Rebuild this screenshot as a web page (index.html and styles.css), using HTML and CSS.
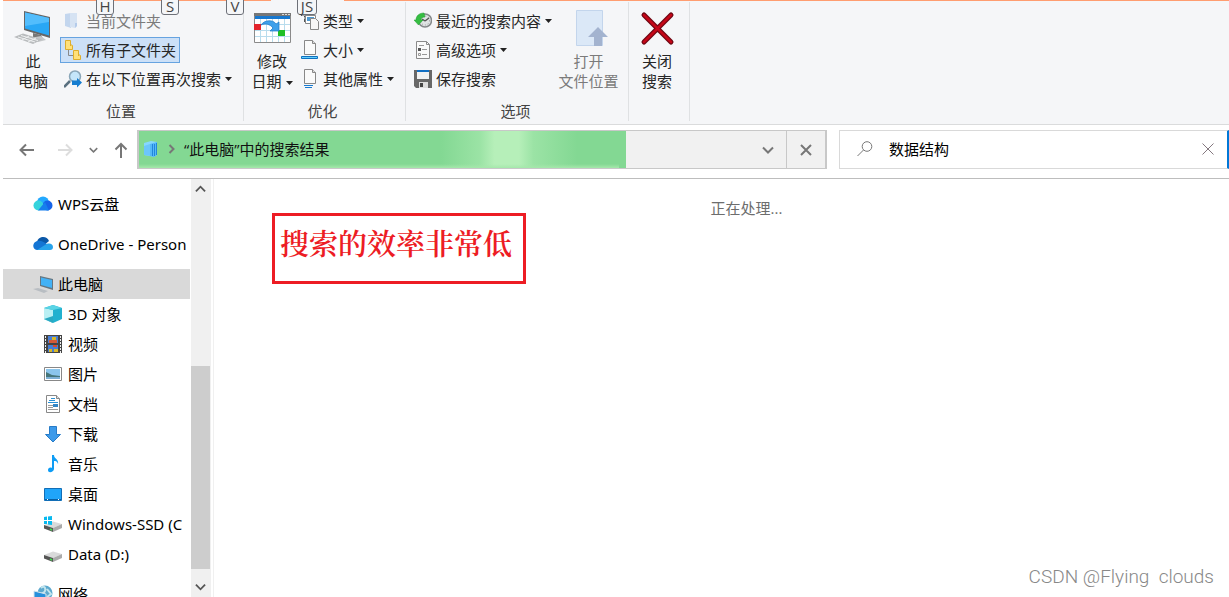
FILE: index.html
```html
<!DOCTYPE html>
<html lang="zh-CN">
<head>
<meta charset="utf-8">
<title>“此电脑”中的搜索结果</title>
<link rel="stylesheet" href="styles.css">
</head>
<body>
<svg class="defs" aria-hidden="true">
  <symbol id="arrow" viewBox="0 0 7 4"><path d="M0 0h7L3.500 4z" fill="#222"/></symbol>
  <symbol id="chev" viewBox="0 0 12 8"><path d="M1 1.500l5 5 5-5" fill="none" stroke="currentColor" stroke-width="2"/></symbol>
  <symbol id="drive" viewBox="0 0 18 18"><path d="M0 10l9-3.500 9 2.500-9 4z" fill="#d9dada"/><path d="M0 10l9 3v4L0 13.500z" fill="#555"/><path d="M9 13l9-4v4l-9 4z" fill="#aaa"/><path d="M6 14l2 1" stroke="#3ee04a" stroke-width="1.500"/></symbol>
</svg>

<header class="ribbon">
  <section class="group">
    <div class="tools">
      <button class="big">
        <svg width="38" height="38" viewBox="0 0 38 38"><path d="M10 3l26 6v21l-26-8z" fill="#666"/><path d="M11 4.500l24 5.500v17.500L11 20.500z" fill="#29a7f5"/><path d="M11 4.500l24 5.500v4L11 18z" fill="#53bdfc"/><path d="M19 25l8 2 2 4-10-2z" fill="#777"/><path d="M16 30l11-2 5 4-8 2z" fill="#c4c7c9"/><path d="M0 29l9-3.500 19 6L19 36z" fill="#b9bcbe"/><path d="M4 29l17 5M7 27.500l17 5M8 32l7-4M14 34l8-4" stroke="#eef0f1"/></svg>
        <span>此<br>电脑</span>
      </button>
      <div class="list">
        <button class="row off"><svg width="18" height="18" viewBox="0 0 18 18"><path d="M1 2l6-1v15l-6-2z" fill="#c3d6ee"/><path d="M6 1h7v13l-2 2-5-1z" fill="#d6e3f3"/><path d="M11 11h2v3l-2 2z" fill="#b4cbea"/></svg><span>当前文件夹</span></button>
        <button class="row on"><svg width="18" height="20" viewBox="0 0 18 20"><path d="M4.500 9v6.500H9" fill="none" stroke="#888"/><path d="M1.500.5h5v4l2 1v4h-7zM9.500 10.500h5v4l2 1v4h-7z" fill="#ffe07a" stroke="#dfae2d"/><path d="M6.500 3v3M14.500 13v3" stroke="#dfae2d"/></svg><span>所有子文件夹</span></button>
        <button class="row"><svg width="18" height="18" viewBox="0 0 18 18"><path d="M0 17l6-6" stroke="#59707f" stroke-width="2.500"/><circle cx="11" cy="6.500" r="5.500" fill="#c5e6fa" stroke="#8aa6b8" stroke-width="1.500"/><path d="M8 10.500h5V8l5 4.500-5 5V15H8z" fill="#167dd0"/></svg><span>在以下位置再次搜索</span><svg class="arrow"><use href="#arrow"/></svg></button>
      </div>
    </div>
    <h2>位置</h2>
  </section>

  <section class="group narrow">
    <div class="tools">
      <button class="big">
        <svg width="38" height="38" viewBox="0 0 38 38"><path d="M1.500 5.500h36v29h-36z" fill="#fff" stroke="#8a8a8a"/><path d="M7.500 11v23M13.500 11v23M19.500 11v23M25.500 11v23M31.500 11v23M2 16.500h35M2 22.500h35M2 28.500h35" stroke="#b8dced"/><path d="M1 5h37v3H1z" fill="#777"/><path d="M29 6.500h2m1 0h2m1 0h2" stroke="#ddd"/><path d="M2 8h35v3H2z" fill="#1878cf"/><path d="M1 16h7v6H1z" fill="#e3242b"/><path d="M25 22h7v6h-7z" fill="#1fbf24"/><path d="M8 17c3-5 12-6 15-1l3-2v9h-9l3-3c-3-4-8-5-12-3z" fill="#3fa0ea" stroke="#1b77c4" stroke-width=".7"/></svg>
        <span>修改<br>日期<svg class="arrow"><use href="#arrow"/></svg></span>
      </button>
      <div class="list">
        <button class="row"><svg width="18" height="18" viewBox="0 0 18 18"><path d="M0 1h6v9H3V4H0z" fill="#555"/><path d="M1 3h3M1 6h3" stroke="#fff"/><path d="M4.500 3.500h10v8h-10z" fill="#fff" stroke="#888"/><path d="M6 5h7v4H6z" fill="#4e9ad3"/><path d="M9.500 6.500h5l3 3v8h-8z" fill="#f7f7f7" stroke="#888"/></svg><span>类型</span><svg class="arrow"><use href="#arrow"/></svg></button>
        <button class="row"><svg width="18" height="20" viewBox="0 0 18 20"><path d="M3.500.5h8l3 3v11h-11z" fill="#fafafa" stroke="#888"/><path d="M11.500.5v3h3" fill="#ddd" stroke="#888"/><path d="M.5 16.500h16v2H.5z" fill="#63d0fa" stroke="#0f70c0"/></svg><span>大小</span><svg class="arrow"><use href="#arrow"/></svg></button>
        <button class="row"><svg width="18" height="20" viewBox="0 0 18 20"><path d="M3.500.5h8l3 3v11h-11z" fill="#fafafa" stroke="#888"/><path d="M11.500.5v3h3" fill="#ddd" stroke="#888"/><path d="M3 16.500h9M4 18.500h7" stroke="#187bd0"/></svg><span>其他属性</span><svg class="arrow"><use href="#arrow"/></svg></button>
      </div>
    </div>
    <h2>优化</h2>
  </section>

  <section class="group options">
    <div class="tools">
      <div class="list">
        <button class="row"><svg width="18" height="18" viewBox="0 0 18 18"><circle cx="11" cy="8.500" r="6.500" fill="#dfe3e4" stroke="#85898b" stroke-width="1.500"/><circle cx="11" cy="8.500" r="4.500" fill="none" stroke="#999" stroke-dasharray="1 2"/><path d="M11 9l4-3M11 9L8 7" stroke="#555" stroke-width="1.500"/><path d="M10 1C5 1 2 4 2 8H0l4.500 5L9 8H7c0-2 1-3 4-3z" fill="#35bd42" stroke="#229b31" stroke-width=".5"/></svg><span>最近的搜索内容</span><svg class="arrow"><use href="#arrow"/></svg></button>
        <button class="row"><svg width="18" height="18" viewBox="0 0 18 18"><path d="M2.500.5h10l3 3v14h-13z" fill="#fafafa" stroke="#8a8a8a"/><path d="M12.500.5v3h3" fill="none" stroke="#8a8a8a"/><path d="M4 7h3v3H4z" fill="#555"/><path d="M8 8.500h5M8 13.500h5M5 4.500h5" stroke="#999"/><path d="M4.500 12.500h2v2h-2z" fill="none" stroke="#999"/></svg><span>高级选项</span><svg class="arrow"><use href="#arrow"/></svg></button>
        <button class="row"><svg width="18" height="18" viewBox="0 0 18 18"><path d="M0 0h18v18H2l-2-2z" fill="#686868"/><path d="M3 0h12v9H3z" fill="#f2f2f2"/><path d="M3 0h12v2H3z" fill="#126fc2"/><path d="M5 12h9v6H5z" fill="#ddd"/><path d="M6 13h3v4H6z" fill="#444"/></svg><span>保存搜索</span></button>
      </div>
      <button class="big off">
        <svg width="38" height="38" viewBox="0 0 38 38"><path d="M6.500 2.500h26v35h-26z" fill="#dbe8f7" stroke="#c3d5ec"/><path d="M18 29l10-10 10 10h-6v9h-8v-9z" fill="#a3b3cf"/></svg>
        <span>打开<br>文件位置</span>
      </button>
    </div>
    <h2>选项</h2>
  </section>

  <section class="group narrow">
    <div class="tools">
      <button class="big">
        <svg width="38" height="38" viewBox="0 0 38 38"><path d="M6 7l27 27M33 7L6 34" stroke="#6d0713" stroke-width="5" stroke-linecap="round"/><path d="M6 7l27 27M33 7L6 34" stroke="#c40718" stroke-width="2.500" stroke-linecap="round"/></svg>
        <span>关闭<br>搜索</span>
      </button>
    </div>
  </section>
  <kbd class="tip tip-h">H</kbd><kbd class="tip tip-s">S</kbd><kbd class="tip tip-v">V</kbd><kbd class="tip tip-js">JS</kbd>
</header>

<nav class="navbar">
  <div class="history">
    <button class="back" aria-label="后退"><svg width="16" height="14" viewBox="0 0 16 14"><path d="M15 7H2M7 1.500L1.500 7 7 12.500" fill="none" stroke="#777" stroke-width="2"/></svg></button>
    <button aria-label="前进"><svg width="16" height="14" viewBox="0 0 16 14"><path d="M1 7h13M9 1.500L14.500 7 9 12.500" fill="none" stroke="#ddd" stroke-width="2"/></svg></button>
    <button aria-label="最近位置"><svg width="9" height="6"><use href="#chev"/></svg></button>
    <button aria-label="向上"><svg width="14" height="16" viewBox="0 0 14 16"><path d="M7 16V2M1.500 7.500L7 2l5.500 5.500" fill="none" stroke="#777" stroke-width="2"/></svg></button>
  </div>
  <div class="address">
    <div class="crumbs">
      <svg width="16" height="18" viewBox="0 0 16 18"><path d="M1 3l7-2 6 1v13l-3 2-4-1-6-1z" fill="#86d7ff"/><path d="M1 6l6-2v12l-6-1z" fill="#6cc6fb"/><path d="M7 4l7-2v13l-3 2-4-1z" fill="#55b9f8"/><path d="M9.500 4v12M11.500 4v12M13.500 3v12" stroke="#2385dc"/></svg>
      <svg width="7" height="10" viewBox="0 0 7 10"><path d="M1.500 1l4 4-4 4" fill="none" stroke="#777" stroke-width="2"/></svg>
      <span>“此电脑”中的搜索结果</span>
    </div>
    <button class="drop" aria-label="历史记录"><svg width="12" height="8"><use href="#chev"/></svg></button>
    <button class="stop" aria-label="停止"><svg width="12" height="12" viewBox="0 0 12 12"><path d="M1 1l10 10M11 1L1 11" stroke="#777" stroke-width="2"/></svg></button>
  </div>
  <div class="search">
    <svg width="16" height="16" viewBox="0 0 16 16"><circle cx="10" cy="5.500" r="4.800" fill="none" stroke="#777"/><path d="M6.500 9L.5 15" stroke="#777"/></svg>
    <input type="text" aria-label="搜索" value="数据结构">
    <button aria-label="清除"><svg width="12" height="12" viewBox="0 0 12 12"><path d="M.5.5l11 11M11.500.5l-11 11" stroke="#84787f"/></svg></button>
  </div>
</nav>

<div class="body">
  <aside class="sidebar">
    <ul class="tree">
      <li class="top"><svg width="20" height="18" viewBox="0 0 20 18"><circle cx="10" cy="7.500" r="6" fill="#23a9ff"/><circle cx="14.500" cy="10.500" r="5" fill="#1664e8"/><circle cx="5.500" cy="10.500" r="5" fill="#35d3dc"/><path d="M5 15.500L12 7l4 8.500z" fill="#167fed"/></svg><span>WPS云盘</span></li>
      <li class="top"><svg width="20" height="18" viewBox="0 0 20 18"><path d="M4 7c1-6 10-7 12-1l-6 5z" fill="#0b58a8"/><path d="M4 15c-6-1-4-9 1-9 4-1 7 2 10 4l-2 5z" fill="#1475d4"/><path d="M4 15l8-5c4-3 8-1 8 2 0 2-1 3-3 3z" fill="#28a3eb"/></svg><span>OneDrive - Person</span></li>
      <li class="top current"><svg width="20" height="18" viewBox="0 0 20 18"><path d="M7 1l13 3v11L7 11z" fill="#667681"/><path d="M8 2.500l11 2.500v8L8 10z" fill="#43b2f6"/><path d="M0 14l5-1 10 3-4 2z" fill="#b8bdc2"/></svg><span>此电脑</span></li>
      <li><svg width="18" height="18" viewBox="0 0 18 18"><path d="M0 3l9-3 9 3v11l-9 4-9-4z" fill="#22b1cf"/><path d="M0 3l9 2v13l-9-4z" fill="#baf0f4"/><path d="M0 3l9-3 9 3-9 2z" fill="#5ad4e5"/><path d="M0 14l9-3v7z" fill="#2aa9c2"/></svg><span>3D 对象</span></li>
      <li><svg width="18" height="18" viewBox="0 0 18 18"><path d="M0 0h18v18H0z" fill="#444"/><path d="M1.500 1v17M16.500 1v17" stroke="#eee" stroke-dasharray="2 1"/><path d="M4 1h10v7H4zM4 10h10v7H4z" fill="#477ed4"/><path d="M5 5h8v3H5z" fill="#d35b38"/><path d="M8 2h4v3H8zM5 14h3v3H5zM10 14h4v3h-4z" fill="#d9b728"/><path d="M9 10h4v2H9z" fill="#d84a2f"/></svg><span>视频</span></li>
      <li><svg width="18" height="18" viewBox="0 0 18 18"><path d="M.5 2.500h17v13H.5z" fill="#fff" stroke="#888"/><path d="M2 4h14v10H2z" fill="#8bc5ec"/><path d="M2 7l6 3 8 1v3H2z" fill="#46767a"/><path d="M2 12h14v2H2z" fill="#7eb0d5"/></svg><span>图片</span></li>
      <li><svg width="18" height="18" viewBox="0 0 18 18"><path d="M2.500.5h10l3 3v14h-13z" fill="#fff" stroke="#888"/><path d="M12.500.5v3h3" fill="#ddd" stroke="#888"/><path d="M7 3.500h4M5 5.500h6M4 7.500h10" stroke="#2a90d4"/><path d="M4 10.500h5M4 12.500h5M4 14.500h10" stroke="#999"/><path d="M9 9h5v3H9z" fill="#3386c6"/></svg><span>文档</span></li>
      <li><svg width="18" height="18" viewBox="0 0 18 18"><path d="M5.500 1.500h7v8h4L9 17 1.500 9.500h4z" fill="#3c9aea" stroke="#277bc7"/></svg><span>下载</span></li>
      <li><svg width="18" height="18" viewBox="0 0 18 18"><path d="M8 0h2c0 4 5 4 4 9-1-3-2-3-4-3v8c0 3-6 5-6 1 0-2 2-3 4-2z" fill="#0d9cf5"/></svg><span>音乐</span></li>
      <li><svg width="18" height="18" viewBox="0 0 18 18"><path d="M.5 3.500h17v12H.5z" fill="#20a5fa" stroke="#126eb6"/><path d="M1 14.500h16" stroke="#0960a4"/><path d="M3 14.500h1m10 0h1" stroke="#fff"/></svg><span>桌面</span></li>
      <li><svg width="18" height="18" viewBox="0 0 18 18"><use href="#drive"/><path d="M0 2l3-.5V5H0zM4 1.500L8 1v4H4zM0 6h3v3H0zM4 6h4v4l-4-.5z" fill="#08b9ef"/></svg><span>Windows-SSD (C</span></li>
      <li><svg width="18" height="18" viewBox="0 0 18 18"><use href="#drive"/></svg><span>Data (D:)</span></li>
      <li class="top last"><svg width="20" height="18" viewBox="0 0 20 18"><circle cx="12" cy="8" r="7.500" fill="#5da9ce"/><path d="M8 3c3-3 5 0 4 3S8 7 8 10M14 4l4 5-4 3" fill="none" stroke="#c2e5ee" stroke-width="2"/><path d="M1 6l12 3v9l-12-3z" fill="#2790dc" stroke="#d5e6ee"/></svg><span>网络</span></li>
    </ul>
    <div class="scrollbar">
      <button aria-label="向上滚动"><svg class="flip" width="11" height="8"><use href="#chev"/></svg></button>
      <div class="track"><div class="thumb"></div></div>
      <button aria-label="向下滚动"><svg width="11" height="8"><use href="#chev"/></svg></button>
    </div>
  </aside>
  <main class="results">
    <p class="status">正在处理...</p>
    <p class="note">搜索的效率非常低</p>
    <p class="watermark">CSDN @Flying&nbsp; clouds</p>
  </main>
</div>
</body>
</html>
```
FILE: styles.css
```css
* { box-sizing: border-box; }
body {
  margin: 0;
  padding-left: 3px;
  height: 100vh;
  display: flex;
  flex-direction: column;
  overflow: hidden;
  background: #fff;
  color: #111;
  font: 15px/20px "Open Sans", "Noto Sans CJK SC", sans-serif;
}
.defs { position: absolute; width: 0; height: 0; }
button {
  border: 0;
  padding: 0;
  background: none;
  color: inherit;
  font: inherit;
}
svg { flex: none; }
h2, p, ul { margin: 0; padding: 0; }

/* Ribbon */
.ribbon {
  position: relative;
  display: flex;
  flex: none;
  padding-top: 2px;
  border-bottom: 1px solid #dadbdc;
  background: linear-gradient(to right, #ff9d70 268px, transparent 268px 341px, #ff9d70 341px) 0 0 / 100% 1px no-repeat #f5f6f8;
  color: #262626;
}
.group {
  display: flex;
  flex-direction: column;
  gap: 9px;
  margin-bottom: 3px;
  padding: 6px 7px 0 3px;
  border-right: 1px solid #dfe1e3;
}
.tools { display: flex; }
.list {
  display: flex;
  flex-direction: column;
  align-items: flex-start;
  gap: 3px;
}
.row {
  display: flex;
  align-items: center;
  gap: 4px;
  height: 26px;
  padding: 0 3px;
  border: 1px solid transparent;
  white-space: nowrap;
}
.on { background: #cce0f7; border-color: #66a3e0; }
.off { color: #7b7b7b; }
.arrow { width: 7px; height: 4px; }
.big {
  display: flex;
  flex-direction: column;
  align-items: center;
  gap: 5px;
  width: 54px;
  white-space: nowrap;
}
.big .arrow { margin-left: 4px; vertical-align: middle; }
.narrow .big { width: 50px; }
.options { padding-left: 4px; }
.options .big { width: 65px; }
.group h2 {
  font-size: 15px;
  font-weight: 400;
  text-align: center;
  color: #444;
}
.tip {
  position: absolute;
  top: -4px;
  width: 18px;
  height: 19px;
  border: 1px solid #6d7078;
  border-radius: 3px;
  background: #f5f6f8;
  color: #444;
  font: 15px/18px "Open Sans", sans-serif;
  text-align: center;
}
.tip-h { left: 93px; }
.tip-s { left: 158px; }
.tip-v { left: 223px; }
.tip-js { left: 294px; width: 20px; }

/* Navigation bar */
.navbar {
  display: flex;
  flex: none;
  padding: 5px 0 9px;
  border-bottom: 1px solid #bdbdbd;
}
.history {
  display: flex;
  flex: none;
  align-items: center;
  justify-content: space-between;
  width: 134px;
  padding: 0 9px 0 16px;
  color: #777;
}
.history button, .address button, .search button { display: flex; align-items: center; justify-content: center; }
.back { margin-right: 6px; }
.address {
  display: flex;
  flex: 1 1 690px;
  height: 39px;
  border: 1px solid #c8c8c8;
  border-width: 1px 2px;
  border-top-width: 1px;
  background:
    linear-gradient(to top, #a5e8ab, transparent 4px) 0 0 / 70% 100% no-repeat,
    linear-gradient(to right, transparent 62%, #9be3a5 70%, #b6efb9 73% 78%, #9be3a5 81%, transparent 90%) 0 0 / 71% 100% no-repeat,
    linear-gradient(#83d893, #83d893) 0 0 / 71% 100% no-repeat,
    #f1f1f1;
  color: #777;
}
.crumbs {
  display: flex;
  flex: 1;
  align-items: center;
  gap: 9px;
  padding: 0 0 2px 4px;
  color: #111;
}
.drop { width: 36px; }
.stop { width: 39px; border-left: 1px solid #c8c8c8; }
.search {
  display: flex;
  flex: 1 1 390px;
  align-items: center;
  height: 39px;
  margin-left: 12px;
  padding: 0 13px 2px 17px;
  border: 1px solid #d9d9d9;
  border-right: 2px solid #0078d7;
}
.search input {
  flex: 1;
  min-width: 0;
  margin-left: 16px;
  padding: 0;
  border: 0;
  outline: 0;
  background: none;
  color: #000;
  font: inherit;
}

/* Body */
.body { display: flex; flex: 1; min-height: 0; }
.sidebar {
  display: flex;
  flex: none;
  width: 211px;
  border-right: 1px solid #f0f0f0;
}
.tree {
  flex: 1;
  min-width: 0;
  padding-top: 10px;
  overflow: hidden;
  list-style: none;
  color: #000;
  font-family: "Noto Sans", "Noto Sans CJK SC", sans-serif;
}
.tree li {
  display: flex;
  align-items: center;
  gap: 6px;
  height: 30px;
  padding-left: 41px;
  overflow: hidden;
  white-space: nowrap;
}
.tree .top { gap: 5px; margin-bottom: 10px; padding-left: 30px; }
.tree .current { margin-bottom: 0; background: #d9d9d9; }
.tree .last { margin-top: 10px; }
.scrollbar {
  display: flex;
  flex-direction: column;
  width: 20px;
  margin: 0 2px 0 1px;
  background: #f0f0f0;
  color: #555;
}
.scrollbar button { display: flex; align-items: center; justify-content: center; width: 19px; height: 20px; }
.flip { transform: rotate(180deg); }
.track { flex: 1; display: flex; flex-direction: column; justify-content: flex-end; padding-bottom: 8px; }
.thumb { height: 55%; width: 19px; background: #cdcdcd; }
.results { position: relative; flex: 1; min-width: 0; padding: 19px 0 0 50px; }
.status { text-align: center; color: #6d6d6d; }
.note {
  position: absolute;
  top: 34px;
  left: 58px;
  padding: 7px 11px 18px 5px;
  border: 3px solid #ed1c24;
  color: #ed1c24;
  font: 600 29px/40px "Noto Serif CJK SC", "Noto Sans CJK SC", serif;
  white-space: nowrap;
}
.watermark {
  position: absolute;
  right: 15px;
  bottom: 8px;
  color: #888;
  font: 300 19px/24px Roboto, sans-serif;
}
```
